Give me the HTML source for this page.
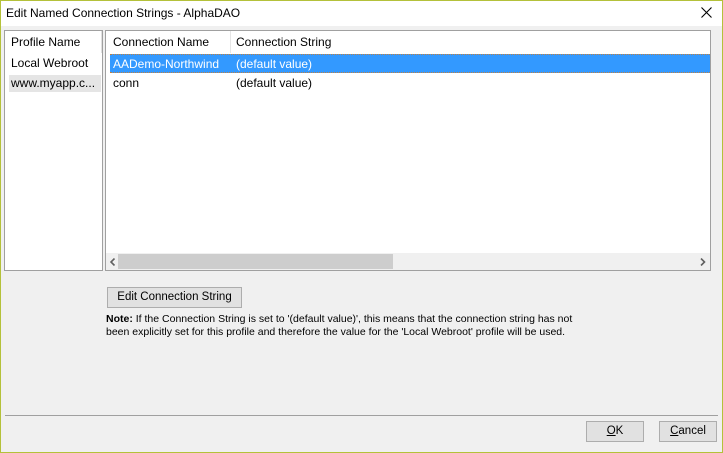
<!DOCTYPE html>
<html><head><style>
*{margin:0;padding:0;box-sizing:border-box}
body{width:723px;height:453px;background:#f0f0f0;font-family:"Liberation Sans",sans-serif;font-size:12px;color:#000;position:relative;overflow:hidden}
.frame{position:absolute;left:0;top:0;width:723px;height:453px;border:1px solid #b4c13a;border-top:none}
.title{position:absolute;left:0;top:0;width:723px;height:26px;background:#fff;border-top:1px solid #b4c13a}
.abs{position:absolute;white-space:nowrap}
.box{position:absolute;background:#fff;border:1px solid #a0a0a0}
.btn{position:absolute;background:#e1e1e1;border:1px solid #adadad;text-align:center;font-size:11.5px;line-height:18px}
</style></head><body>
<div class="title"></div>
<div class="abs" style="left:6px;top:6px;font-size:12px">Edit Named Connection Strings - AlphaDAO</div>
<svg class="abs" style="left:701px;top:7px" width="11" height="11"><path d="M0.5 0.5L10.5 10.5M10.5 0.5L0.5 10.5" stroke="#000" stroke-width="1.1"/></svg>
<div class="frame"></div>

<div class="box" style="left:4px;top:30px;width:99px;height:241px"></div>
<div class="abs" style="left:9px;top:75px;width:92px;height:17px;background:#e5e5e5"></div>
<div class="abs" style="left:11px;top:35px">Profile Name</div>
<div class="abs" style="left:11px;top:56px">Local Webroot</div>
<div class="abs" style="left:11px;top:76px">www.myapp.c...</div>
<div class="abs" style="left:101px;top:31px;width:1px;height:22px;background:#e0e0e0"></div>

<div class="box" style="left:105px;top:30px;width:606px;height:241px"></div>
<div class="abs" style="left:230px;top:31px;width:1px;height:22px;background:#e5e5e5"></div>
<div class="abs" style="left:113px;top:35px">Connection Name</div>
<div class="abs" style="left:236px;top:35px">Connection String</div>
<div class="abs" style="left:110px;top:54px;width:600px;height:19px;background:#3399ff;border-top:1px dotted #c08040;border-bottom:1px dotted #c08040"></div>
<div class="abs" style="left:113px;top:57px;color:#fff">AADemo-Northwind</div>
<div class="abs" style="left:236px;top:57px;color:#fff">(default value)</div>
<div class="abs" style="left:113px;top:76px">conn</div>
<div class="abs" style="left:236px;top:76px">(default value)</div>
<div class="abs" style="left:106px;top:253px;width:604px;height:17px;background:#f0f0f0"></div>
<div class="abs" style="left:118px;top:254px;width:275px;height:15px;background:#cdcdcd"></div>
<svg class="abs" style="left:110px;top:258px" width="6" height="8"><path d="M4.5 0.5L1 4L4.5 7.5" stroke="#606060" stroke-width="1.6" fill="none"/></svg>
<svg class="abs" style="left:700px;top:258px" width="6" height="8"><path d="M1 0.5L4.5 4L1 7.5" stroke="#606060" stroke-width="1.6" fill="none"/></svg>

<div class="btn" style="left:107px;top:287px;width:135px;height:21px">Edit Connection String</div>
<div class="abs" style="left:106px;top:313px;font-size:10.5px;line-height:13px"><b>Note:</b> If the Connection String is set to '(default value)', this means that the connection string has not<br>been explicitly set for this profile and therefore the value for the 'Local Webroot' profile will be used.</div>

<div class="abs" style="left:5px;top:415px;width:713px;height:1px;background:#a0a0a0"></div>
<div class="btn" style="left:586px;top:421px;width:58px;height:21px"><u>O</u>K</div>
<div class="btn" style="left:659px;top:421px;width:58px;height:21px"><u>C</u>ancel</div>
</body></html>
